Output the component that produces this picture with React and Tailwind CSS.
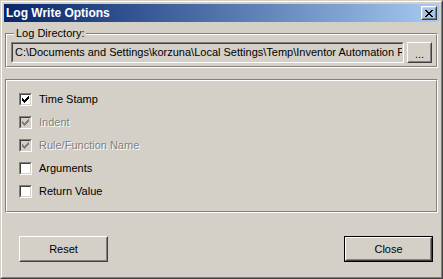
import React from 'react';

const Check = ({ color }) => (
  <svg width="7" height="7" viewBox="0 0 7 7" shapeRendering="crispEdges">
    <path
      fill={color}
      d="M0 2h1v3H0z M1 3h1v3H1z M2 4h1v3H2z M3 3h1v3H3z M4 2h1v3H4z M5 1h1v3H5z M6 0h1v3H6z"
    />
  </svg>
);

const CloseX = () => (
  <svg width="8" height="7" viewBox="0 0 8 7" shapeRendering="crispEdges">
    <path
      fill="#000"
      d="M0 0h2v1H0z M6 0h2v1H6z M1 1h2v1H1z M5 1h2v1H5z M2 2h4v1H2z M3 3h2v1H3z M2 4h4v1H2z M1 5h2v1H1z M5 5h2v1H5z M0 6h2v1H0z M6 6h2v1H6z"
    />
  </svg>
);

const CheckBox = ({ checked, disabled }) => (
  <div className="w-[13px] h-[13px] shrink-0 border border-t-[#808080] border-l-[#808080] border-b-white border-r-white">
    <div
      className={`w-full h-full flex items-center justify-center border border-t-[#404040] border-l-[#404040] border-b-[#d4d0c8] border-r-[#d4d0c8] ${
        disabled ? 'bg-[#d4d0c8]' : 'bg-white'
      }`}
    >
      {checked && <Check color={disabled ? '#808080' : '#000'} />}
    </div>
  </div>
);

const Btn = ({ children, isDefault, className = '' }) => (
  <div className={`shrink-0 ${isDefault ? 'border border-black' : ''} ${className}`}>
    <div className="h-full border border-t-white border-l-white border-b-[#404040] border-r-[#404040]">
      <div className="h-full flex items-center justify-center border border-t-[#d4d0c8] border-l-[#d4d0c8] border-b-[#808080] border-r-[#808080]">
        {children}
      </div>
    </div>
  </div>
);

const options = [
  { label: 'Time Stamp', checked: true, disabled: false },
  { label: 'Indent', checked: true, disabled: true },
  { label: 'Rule/Function Name', checked: true, disabled: true },
  { label: 'Arguments', checked: false, disabled: false },
  { label: 'Return Value', checked: false, disabled: false },
];

export default function App() {
  return (
    <div className="w-[443px] h-[279px] bg-[#d4d0c8] text-black text-[11px] font-['Liberation_Sans',Arial,sans-serif] border border-t-[#d4d0c8] border-l-[#d4d0c8] border-b-[#404040] border-r-[#404040]">
      <div className="h-full flex flex-col p-[2px] border border-t-white border-l-white border-b-[#808080] border-r-[#808080]">
        {/* title bar */}
        <div className="h-[18px] shrink-0 flex items-center justify-between pl-[2px] pr-[2px] bg-linear-to-r from-[#0a246a] to-[#a6caf0]">
          <span className="text-white font-bold text-[12px] leading-none">Log Write Options</span>
          <Btn className="w-[16px] h-[14px]">
            <CloseX />
          </Btn>
        </div>

        {/* log directory group */}
        <div className="relative mt-[11px] mx-[1px] border border-t-[#808080] border-l-[#808080] border-b-white border-r-white">
          <div className="flex gap-[3px] pl-[4px] pr-[4px] pt-[7px] pb-[3px] border border-t-white border-l-white border-b-[#808080] border-r-[#808080]">
            <div className="flex-1 min-w-0 h-[21px] border border-t-[#808080] border-l-[#808080] border-b-white border-r-white">
              <div className="h-full flex items-center pl-[2px] overflow-hidden whitespace-nowrap border border-t-[#404040] border-l-[#404040] border-b-[#d4d0c8] border-r-[#d4d0c8]">
                C:\Documents and Settings\korzuna\Local Settings\Temp\Inventor Automation F
              </div>
            </div>
            <Btn className="w-[25px] h-[21px]">
              <span className="pt-[4px] leading-none">...</span>
            </Btn>
          </div>
          <span className="absolute left-[8px] -top-[8px] px-[2px] leading-[14px] bg-[#d4d0c8]">Log Directory:</span>
        </div>

        {/* options panel */}
        <div className="mt-[11px] mx-[1px] h-[134px] shrink-0 border border-t-[#808080] border-l-[#808080] border-b-white border-r-white">
          <div className="h-full flex flex-col gap-[10px] pl-[12px] pt-[12px] border border-t-white border-l-white border-b-[#808080] border-r-[#808080]">
            {options.map((o) => (
              <div key={o.label} className="h-[13px] flex items-center">
                <CheckBox checked={o.checked} disabled={o.disabled} />
                <span
                  className={`ml-[7px] leading-[13px] ${
                    o.disabled ? 'text-[#808080] [text-shadow:1px_1px_0_#fff]' : ''
                  }`}
                >
                  {o.label}
                </span>
              </div>
            ))}
          </div>
        </div>

        {/* buttons */}
        <div className="mt-[23px] flex justify-between pl-[15px] pr-[6px]">
          <Btn className="w-[89px] h-[26px]">Reset</Btn>
          <Btn isDefault className="w-[89px] h-[26px]">Close</Btn>
        </div>
      </div>
    </div>
  );
}
